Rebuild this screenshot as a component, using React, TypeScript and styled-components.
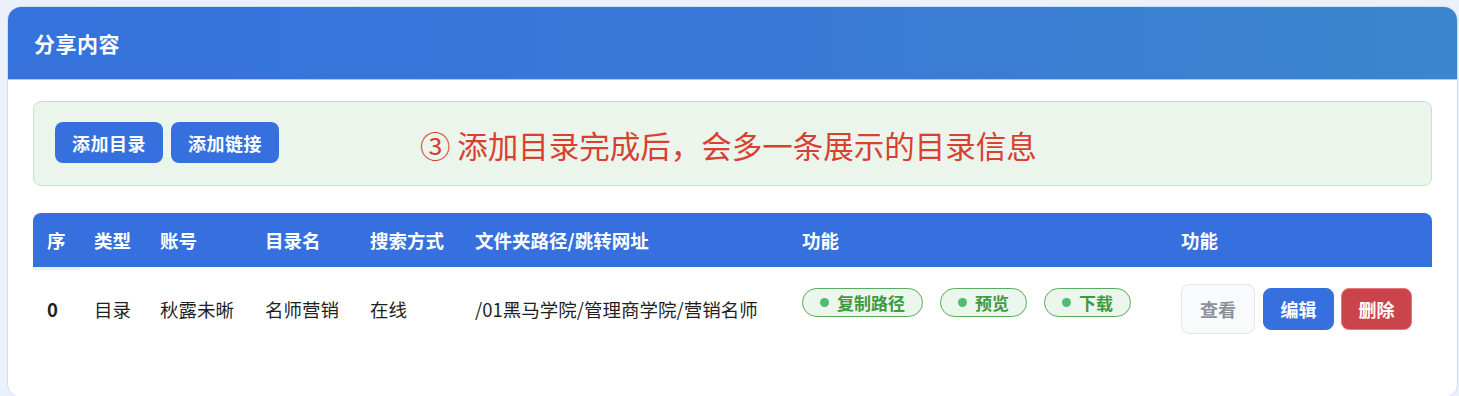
import styled, { createGlobalStyle } from 'styled-components';
import { FC } from 'react';

const GlobalStyle = createGlobalStyle`
  html, body {
    margin: 0;
    padding: 0;
    background: #eaf1fa;
    font-family: "Noto Sans CJK SC", "Noto Sans", sans-serif;
  }
`;

const columns = ['序', '类型', '账号', '目录名', '搜索方式', '文件夹路径/跳转网址', '功能', '功能'];

const row = {
  index: '0',
  type: '目录',
  account: '秋露未晰',
  name: '名师营销',
  search: '在线',
  path: '/01黑马学院/管理商学院/营销名师',
};

const tags = ['复制路径', '预览', '下载'];

const App: FC = () => {
  return (
    <>
      <GlobalStyle />
      <Page>
        <Card>
          <CardHeader>
            <CardTitle>分享内容</CardTitle>
          </CardHeader>
          <CardBody>
            <Toolbar>
              <PrimaryButton>添加目录</PrimaryButton>
              <PrimaryButton>添加链接</PrimaryButton>
              <Note>③ 添加目录完成后，会多一条展示的目录信息</Note>
            </Toolbar>

            <Table>
              <HeadRow>
                {columns.map((c, i) => (
                  <HeadCell key={i}>{c}</HeadCell>
                ))}
              </HeadRow>
              <BodyRow>
                <Cell first>{row.index}</Cell>
                <Cell>{row.type}</Cell>
                <Cell>{row.account}</Cell>
                <Cell>{row.name}</Cell>
                <Cell>{row.search}</Cell>
                <Cell>{row.path}</Cell>
                <Cell>
                  <TagGroup>
                    {tags.map((t) => (
                      <Tag key={t}>
                        <Dot />
                        {t}
                      </Tag>
                    ))}
                  </TagGroup>
                </Cell>
                <Cell>
                  <Actions>
                    <GhostButton>查看</GhostButton>
                    <ActionButton variant="primary">编辑</ActionButton>
                    <ActionButton variant="danger">删除</ActionButton>
                  </Actions>
                </Cell>
              </BodyRow>
            </Table>
          </CardBody>
        </Card>
      </Page>
    </>
  );
};

export default App;

const Page = styled.div`
  padding: 6px 0 0 7px;
  height: 396px;
  box-sizing: border-box;
  overflow: hidden;
`;

const Card = styled.div`
  width: 1451px;
  height: 392px;
  box-sizing: border-box;
  background: #fff;
  border: 1px solid #cfe0f5;
  border-radius: 14px;
  overflow: hidden;
`;

const CardHeader = styled.div`
  height: 72px;
  display: flex;
  align-items: center;
  padding: 0 26px;
  background: linear-gradient(90deg, #3572dc 0%, #3879d8 50%, #3b86cc 100%);
  border-bottom: 1px solid #a8cbef;
`;

const CardTitle = styled.h2`
  margin: 0;
  color: #fff;
  font-size: 21px;
  font-weight: 700;
  letter-spacing: 0.5px;
`;

const CardBody = styled.div`
  padding: 21px 25px 0;
`;

const Toolbar = styled.div`
  display: flex;
  align-items: center;
  gap: 8px;
  height: 85px;
  box-sizing: border-box;
  padding: 0 21px;
  background: #ebf5ec;
  border: 1px solid #c7e2ca;
  border-radius: 8px;
`;

const PrimaryButton = styled.button`
  width: 108px;
  height: 41px;
  padding: 0;
  margin-bottom: 2px;
  border: none;
  border-radius: 8px;
  background: #3570de;
  color: #fff;
  font-family: inherit;
  font-size: 18px;
  font-weight: 700;
  letter-spacing: 0.5px;
  cursor: pointer;
`;

const Note = styled.div`
  margin-left: 133px;
  margin-top: 4px;
  color: #d8412f;
  font-size: 30.5px;
  font-weight: 400;
  line-height: 1;
`;

const Table = styled.div`
  margin-top: 27px;
`;

const grid = `
  display: grid;
  grid-template-columns: 47px 66px 105px 105px 105px 327px 379px 1fr;
  align-items: center;
`;

const HeadRow = styled.div`
  ${grid};
  height: 54px;
  background: #3570de;
  border-radius: 8px 8px 0 0;
`;

const HeadCell = styled.div`
  padding-left: 14px;
  color: #fff;
  font-size: 18.5px;
  font-weight: 700;
  white-space: nowrap;
`;

const BodyRow = styled.div`
  ${grid};
  height: 84px;
`;

const Cell = styled.div<{ first?: boolean }>`
  padding-left: 14px;
  color: #1f1f1f;
  font-size: 18.5px;
  white-space: nowrap;
  align-self: stretch;
  display: flex;
  align-items: center;
  box-shadow: ${(p) => (p.first ? 'inset 0 3px 0 #eef0f3' : 'none')};
  font-weight: ${(p) => (p.first ? 600 : 400)};
`;

const TagGroup = styled.div`
  display: flex;
  gap: 17px;
  margin-bottom: 14px;
`;

const Tag = styled.span`
  display: inline-flex;
  align-items: center;
  gap: 8px;
  height: 29px;
  box-sizing: border-box;
  padding: 0 17px;
  border: 1.5px solid #5aab5e;
  border-radius: 15px;
  background: #ebf6ec;
  color: #3f9a46;
  font-size: 17px;
  font-weight: 700;
`;

const Dot = styled.span`
  width: 9px;
  height: 9px;
  border-radius: 50%;
  background: #4cbd72;
`;

const Actions = styled.div`
  display: flex;
  align-items: center;
  gap: 7px;
`;

const GhostButton = styled.button`
  width: 74px;
  height: 50px;
  margin-right: 1px;
  border: 1px solid #e3e6ea;
  border-radius: 8px;
  background: #f9fafc;
  color: #8b9099;
  font-family: inherit;
  font-size: 18px;
  font-weight: 700;
  cursor: pointer;
`;

const ActionButton = styled.button<{ variant: 'primary' | 'danger' }>`
  width: 71px;
  height: 42px;
  border: 1px solid ${(p) => (p.variant === 'danger' ? '#e57a80' : '#3570de')};
  border-radius: 8px;
  background: ${(p) => (p.variant === 'danger' ? '#cc444b' : '#3570de')};
  color: #fff;
  font-family: inherit;
  font-size: 18px;
  font-weight: 700;
  cursor: pointer;
`;
